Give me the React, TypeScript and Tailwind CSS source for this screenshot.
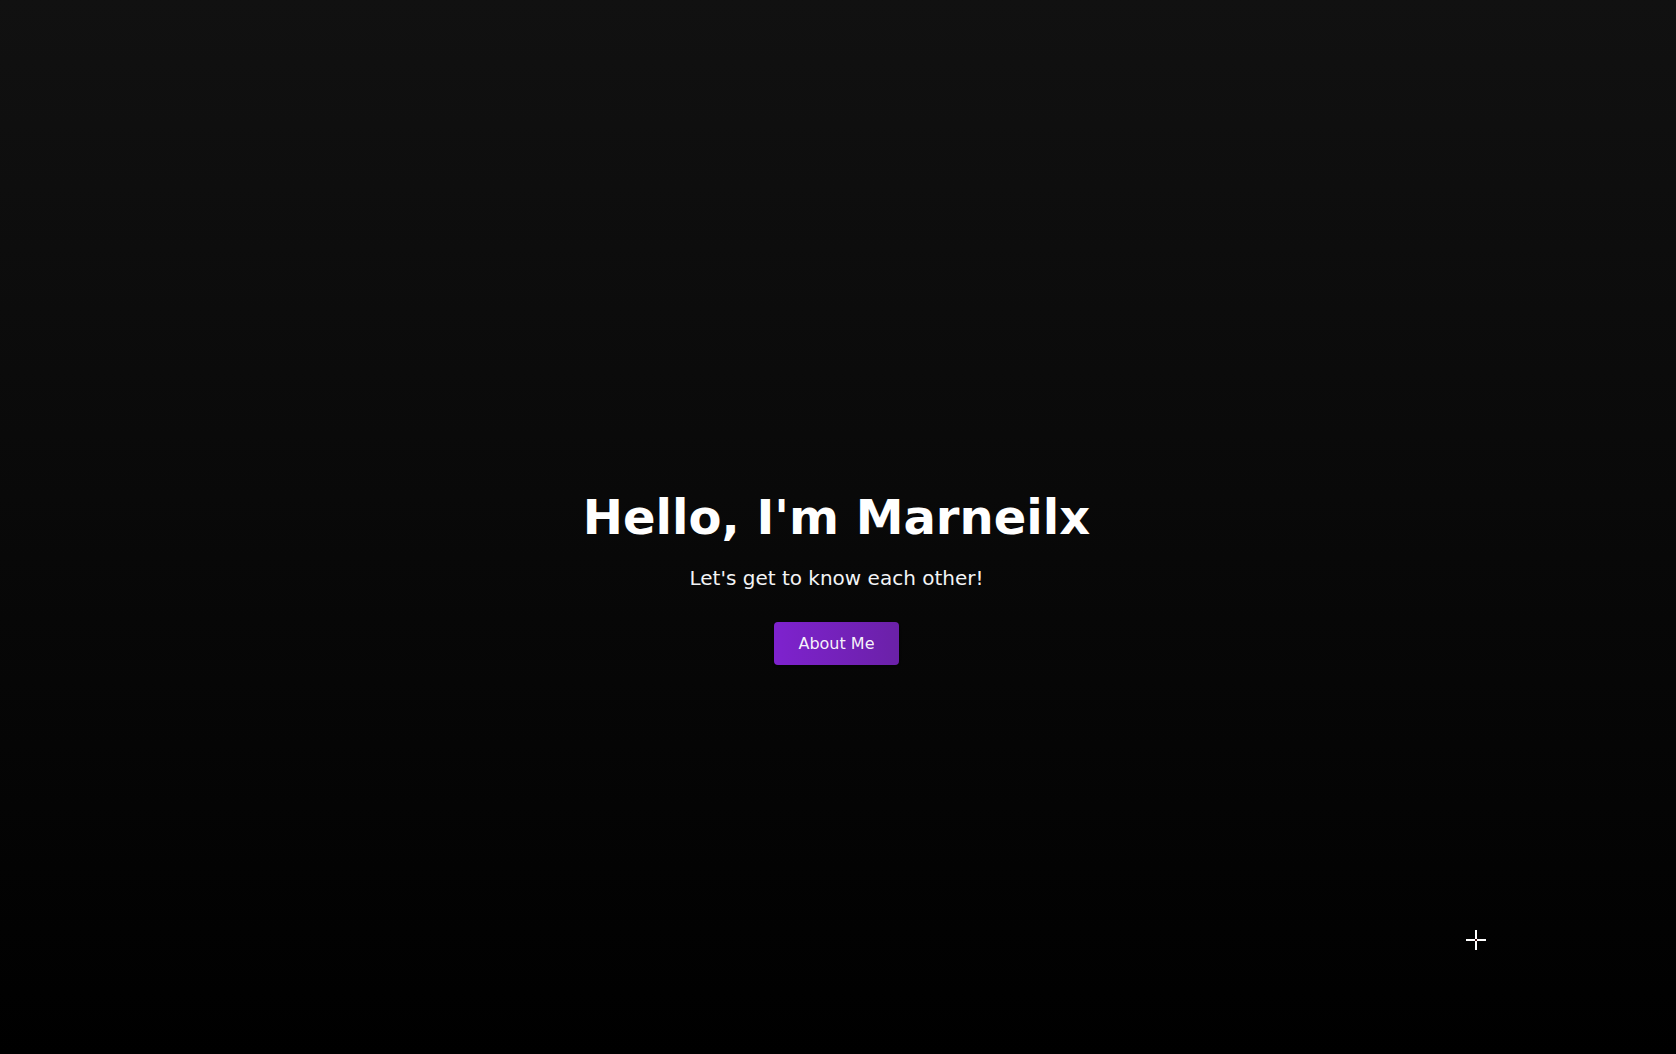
import React from 'react';

const Cursor = () => (
  <div className="absolute left-[1466px] top-[930px] w-5 h-5 pointer-events-none">
    <div className="absolute left-[9px] top-0 w-[2px] h-5 bg-white" />
    <div className="absolute top-[9px] left-0 h-[2px] w-5 bg-white" />
    <div className="absolute left-[9px] top-[9px] w-[2px] h-[2px] bg-[#3a0a0a]" />
  </div>
);

const App = () => {
  return (
    <main
      className="relative min-h-screen w-full overflow-hidden bg-linear-to-b/srgb from-[#111111] to-[#000000] text-white flex flex-col items-center justify-center pt-[104px] pr-[3px]"
      style={{ fontFamily: '"DejaVu Sans", Verdana, sans-serif' }}
    >
      <section className="flex flex-col items-center text-center">
        <h1 className="text-5xl leading-none font-bold tracking-normal">Hello, I'm Marneilx</h1>
        <p className="mt-[23px] text-xl leading-7 text-gray-100">Let's get to know each other!</p>
        <button className="mt-[30px] h-[43px] px-6 rounded bg-linear-to-r/srgb from-[#7e22ce] to-[#6b21a8] text-base text-white/95 shadow-sm">
          About Me
        </button>
      </section>
      <Cursor />
    </main>
  );
};

export default App;
